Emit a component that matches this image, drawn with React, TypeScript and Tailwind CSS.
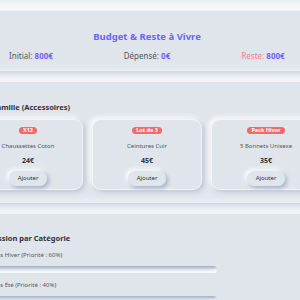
import React from 'react';

const products = [
  { badge: 'X12', name: 'Chaussettes Coton', price: '24€' },
  { badge: 'Lot de 3', name: 'Ceintures Cuir', price: '45€' },
  { badge: 'Pack Hiver', name: '5 Bonnets Unisexe', price: '35€' },
];

const categories = [
  { label: 'Vêtements Hiver (Priorité : 60%)', value: 0 },
  { label: 'Vêtements Été (Priorité : 40%)', value: 0 },
];

export default function App() {
  return (
    <div className="min-h-[300px] w-full overflow-hidden bg-[#e0e5ec] font-['Noto_Sans',sans-serif] text-[#333]">
      <div className="flex justify-center pt-[11px]">
        <div className="mr-[6px] flex w-[408px] shrink-0 flex-col gap-[11px]">
          {/* Budget header */}
          <div className="h-[60px] bg-[#e0e5ec] px-[30px] pt-[18px] shadow-[0_6px_10px_#b3bdcc,0_-8px_14px_#ffffff]">
            <h1 className="text-center text-[9.5px] font-bold leading-[16px] text-[#6c63ff]">
              Budget &amp; Reste à Vivre
            </h1>
            <div className="mt-[5px] grid grid-cols-3 text-center text-[8px] leading-[12px]">
              <span className="text-[#555]">
                Initial: <b className="text-[#6c63ff]">800€</b>
              </span>
              <span className="text-[#555]">
                Dépensé: <b className="text-[#6c63ff]">0€</b>
              </span>
              <span className="text-[#f07f8a]">
                Reste: <b className="text-[#6c63ff]">800€</b>
              </span>
            </div>
          </div>

          {/* Products */}
          <div className="bg-[#e0e5ec] px-[30px] pb-[13px] pt-[20px] shadow-[0_6px_10px_#b3bdcc,0_-8px_14px_#ffffff]">
            <h2 className="text-[7.5px] font-bold leading-[10px] text-[#333]">Pack Famille (Accessoires)</h2>
            <div className="mt-[7px] grid grid-cols-3 gap-[9px]">
              {products.map(p => (
                <div
                  key={p.name}
                  className="flex h-[71px] flex-col items-center rounded-[9px] border border-white/60 bg-[#e0e5ec] pt-[7px] shadow-[2px_2px_5px_#bcc4d0,-2px_-2px_5px_#ffffff]"
                >
                  <span className="rounded-full bg-[#f06a6a] px-[4px] text-[5.5px] font-bold leading-[7px] text-white">
                    {p.badge}
                  </span>
                  <span className="mt-[8px] text-[6px] leading-[8px] text-[#555]">{p.name}</span>
                  <span className="mt-[6px] text-[7px] font-bold leading-[9px] text-[#333]">{p.price}</span>
                  <button className="mt-[6px] h-[15px] rounded-[7px] bg-[#e0e5ec] px-[9px] text-[6px] leading-[15px] text-[#333] shadow-[2px_2px_4px_#a3b1c6,-2px_-2px_4px_#ffffff]">
                    Ajouter
                  </button>
                </div>
              ))}
            </div>
          </div>

          {/* Progression */}
          <div className="bg-[#e0e5ec] px-[30px] pb-[20px] pt-[19px] shadow-[0_6px_10px_#b3bdcc,0_-8px_14px_#ffffff]">
            <h2 className="text-[7.5px] font-bold leading-[10px] text-[#333]">Progression par Catégorie</h2>
            {categories.map(c => (
              <div key={c.label} className="mt-[8px]">
                <div className="text-[6px] leading-[8px] text-[#555]">{c.label}</div>
                <div className="mt-[7px] h-[7px] w-[70%] rounded-full bg-[#e0e5ec] shadow-[inset_2px_2px_3px_#a3b1c6,inset_-2px_-2px_3px_#ffffff]">
                  <div className="h-full rounded-full bg-[#6c63ff]" style={{ width: `${c.value}%` }} />
                </div>
              </div>
            ))}
          </div>
        </div>
      </div>
    </div>
  );
}
